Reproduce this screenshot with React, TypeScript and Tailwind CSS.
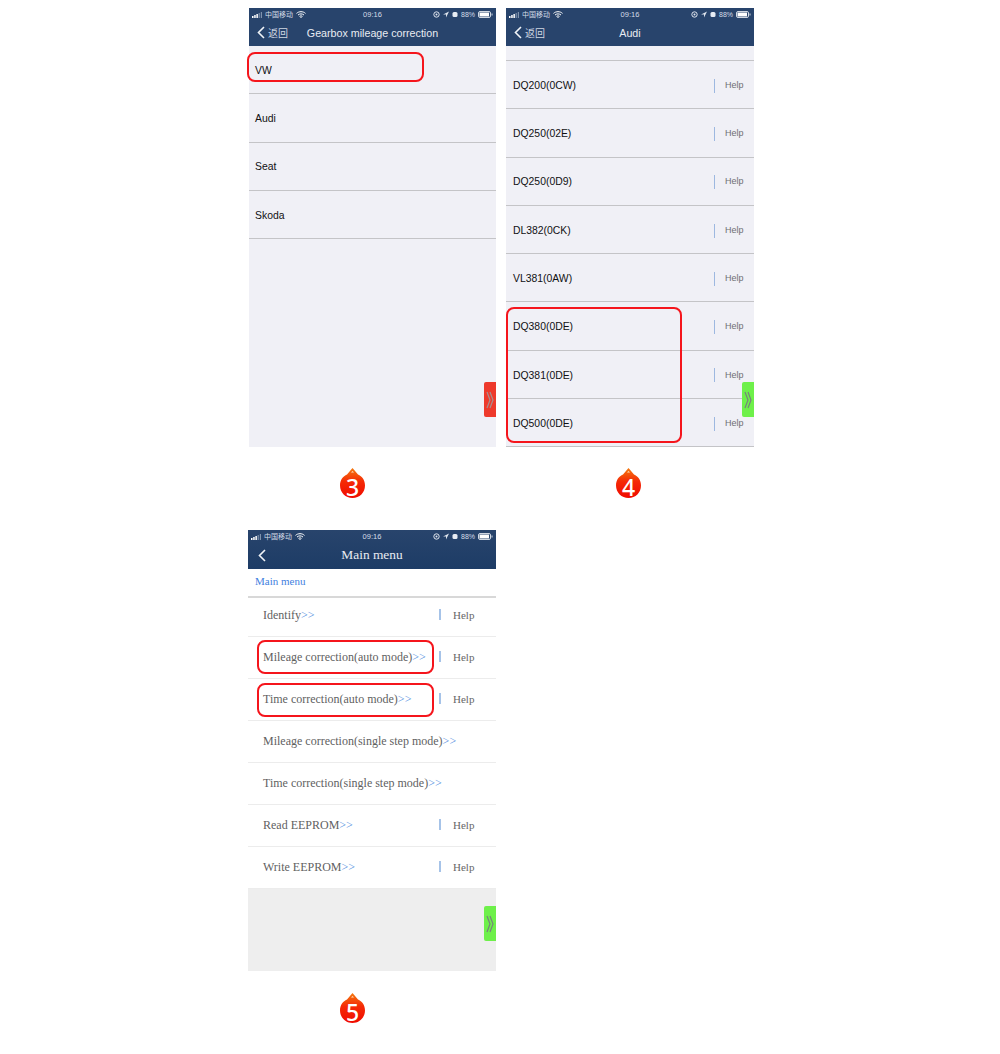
import React from "react";

const sans = "font-['Liberation_Sans','Noto_Sans_CJK_SC',sans-serif]";
const serif = "font-['Liberation_Serif','Noto_Sans_CJK_SC',serif]";

function StatusBar() {
  return (
    <div className={`h-[13px] flex items-center justify-between pl-[3px] pr-[3px] text-[7px] leading-none text-[#d5dde8] ${sans}`}>
      <div className="flex items-center gap-[2px] w-[90px]">
        <svg width="11" height="6" viewBox="0 0 11 6">
          <rect x="0" y="4" width="1.5" height="2" fill="#fff" />
          <rect x="2.2" y="3" width="1.5" height="3" fill="#fff" />
          <rect x="4.4" y="2" width="1.5" height="4" fill="#fff" />
          <rect x="6.6" y="1" width="1.2" height="5" fill="#7f93ad" />
          <rect x="8.8" y="0" width="1.2" height="6" fill="#7f93ad" />
        </svg>
        <span>中国移动</span>
        <svg width="10" height="7" viewBox="0 0 10 7" className="ml-[1px]">
          <path d="M0.5 2.4C3 .1 7 .1 9.5 2.4M2 4C3.8 2.5 6.2 2.5 8 4M3.5 5.4C4.4 4.7 5.6 4.7 6.5 5.4" stroke="#fff" strokeWidth="1" fill="none" />
          <circle cx="5" cy="6.2" r=".7" fill="#fff" />
        </svg>
      </div>
      <span className="text-[7.5px]">09:16</span>
      <div className="flex items-center justify-end gap-[3px] w-[90px]">
        <svg width="7" height="7" viewBox="0 0 7 7"><circle cx="3.5" cy="3.5" r="2.7" stroke="#dfe5ee" strokeWidth="1" fill="none" /><circle cx="3.5" cy="3.5" r="1" fill="#dfe5ee" /></svg>
        <svg width="6" height="7" viewBox="0 0 6 7"><path d="M6 .5L0 3.5h3v3z" fill="#dfe5ee" /></svg>
        <svg width="6" height="7" viewBox="0 0 6 7"><rect x=".5" y="1" width="5" height="5" rx="1.5" fill="#e7ecf3" /></svg>
        <span>88%</span>
        <svg width="15" height="7" viewBox="0 0 15 7">
          <rect x=".5" y=".5" width="12" height="6" rx="1.5" stroke="#cfd7e2" fill="none" />
          <rect x="1.5" y="1.5" width="9.5" height="4" fill="#fff" />
          <rect x="13.5" y="2.5" width="1" height="2" fill="#cfd7e2" />
        </svg>
      </div>
    </div>
  );
}

function Chevron() {
  return (
    <svg width="8" height="13" viewBox="0 0 8 13" className="shrink-0">
      <path d="M7 1L1.5 6.5L7 12" stroke="#f1f4f8" strokeWidth="1.6" fill="none" />
    </svg>
  );
}

function Header({ title }: { title: string }) {
  return (
    <div className="h-[38px] bg-[#28446c] text-white">
      <StatusBar />
      <div className={`relative h-[24px] flex items-center justify-center text-[10.7px] text-[#e8ecf2] ${sans}`}>
        <div className="absolute left-[8px] top-[4px] flex items-center gap-[3px]">
          <Chevron />
          <span className="text-[10px] font-['Noto_Sans_CJK_SC',sans-serif] text-[#cfd7e2]">返回</span>
        </div>
        <span className="font-medium">{title}</span>
      </div>
    </div>
  );
}

function Tab({ green, className }: { green?: boolean; className: string }) {
  return (
    <div className={`absolute right-0 w-[12px] h-[35px] rounded-l-[2px] flex items-center justify-center ${green ? "bg-[#6ef04a]" : "bg-[#ee3a2c]"} ${className}`}>
      <svg width="8" height="20" viewBox="0 0 8 20">
        <path d="M1 2L4 10L1 18M4 2L7 10L4 18" stroke={green ? "#76847c" : "#a89090"} strokeWidth="1.2" fill="none" />
      </svg>
    </div>
  );
}

function Row1({ label, help, inset }: { label: string; help?: boolean; inset?: boolean }) {
  return (
    <div className={`h-[48.3px] border-b border-[#c4c4c7] flex items-center pt-[2px] ${inset ? "pl-[7px]" : "pl-[6px]"} text-[10.4px] text-[#111113] ${sans}`}>
      <span className="grow">{label}</span>
      {help && (
        <div className="flex items-center w-[40px] shrink-0">
          <span className="w-[1px] h-[14px] bg-[#9db8e0]" />
          <span className="ml-[10px] text-[9px] text-[#6f6f73]">Help</span>
        </div>
      )}
    </div>
  );
}

function Row3({ label, help = true, first }: { label: string; help?: boolean; first?: boolean }) {
  return (
    <div className={`${first ? "h-[39px] pb-[5px]" : "h-[42px] pb-[2px]"} border-b border-[#ececec] flex items-center pl-[15px] text-[12px] text-[#5f5f5f] ${serif}`}>
      <span className="grow">
        {label}
        <span className="text-[#4f8ce0]">&gt;&gt;</span>
      </span>
      {help && (
        <div className="flex items-center w-[57px] shrink-0">
          <span className="w-[2px] h-[11px] bg-[#a6c3e8]" />
          <span className="ml-[12px] pt-[1px] text-[11px] text-[#666]">Help</span>
        </div>
      )}
    </div>
  );
}

function Badge({ n }: { n: number }) {
  return (
    <div className="relative w-[25px] h-[30px]">
      <svg width="25" height="30" viewBox="0 0 25 30" className="absolute inset-0">
        <defs>
          <linearGradient id={`b${n}`} x1="0" y1="0" x2="0" y2="1">
            <stop offset="0" stopColor="#f47a10" />
            <stop offset="0.45" stopColor="#f52a06" />
            <stop offset="1" stopColor="#f00a00" />
          </linearGradient>
        </defs>
        <path d="M12.5 0L18 6.5C22 8.2 25 12 25 17.5C25 24.5 19.5 30 12.5 30C5.5 30 0 24.5 0 17.5C0 12 3 8.2 7 6.5Z" fill={`url(#b${n})`} />
        <path d="M11 4.5L12.5 3L14 4.5Z" fill="#ffe2c0" />
      </svg>
      <span className="absolute inset-x-0 top-[7px] text-center text-[23px] leading-[24px] font-medium text-white font-['Noto_Sans',sans-serif]">{n}</span>
    </div>
  );
}

function RedBox({ className }: { className: string }) {
  return <div className={`absolute border-2 border-[#f5151c] rounded-[8px] ${className}`} />;
}

export default function App() {
  return (
    <div className="w-[1000px] h-[1054px] bg-white pt-[8px] overflow-hidden">
      <div className="flex items-start">
        <div className="ml-[249px] w-[247px]">
          <div className="relative h-[439px] bg-[#f0f0f6]">
            <Header title="Gearbox mileage correction" />
            <Row1 label="VW" />
            <Row1 label="Audi" />
            <Row1 label="Seat" />
            <Row1 label="Skoda" />
            <Tab className="top-[374px]" />
            <RedBox className="left-[-2px] top-[44px] w-[177px] h-[30px]" />
          </div>
          <div className="pt-[21px] pl-[91px]">
            <Badge n={3} />
          </div>
        </div>
        <div className="ml-[10px] w-[248px]">
          <div className="relative h-[439px] bg-[#f0f0f6]">
            <Header title="Audi" />
            <div className="h-[15px] border-b border-[#c4c4c7]" />
            {["DQ200(0CW)", "DQ250(02E)", "DQ250(0D9)", "DL382(0CK)", "VL381(0AW)", "DQ380(0DE)", "DQ381(0DE)", "DQ500(0DE)"].map((l) => (
              <Row1 key={l} label={l} help inset />
            ))}
            <Tab green className="top-[374px]" />
            <RedBox className="left-0 top-[299px] w-[176px] h-[136px]" />
          </div>
          <div className="pt-[21px] pl-[110px]">
            <Badge n={4} />
          </div>
        </div>
      </div>

      <div className="ml-[248px] w-[248px] mt-[32px]">
        <div className="relative h-[441px] bg-white">
          <div className="h-[39px] bg-gradient-to-b from-[#28446c] to-[#1d3c66] text-white">
            <StatusBar />
            <div className={`relative h-[24px] flex items-center justify-center text-[13.4px] text-[#e8ecf2] ${serif}`}>
              <div className="absolute left-[10px] top-[6px]"><Chevron /></div>
              <span>Main menu</span>
            </div>
          </div>
          <div className={`h-[29px] border-b-2 border-[#d8d8d8] pl-[7px] pt-[4px] text-[11px] text-[#3f7fe0] ${serif}`}>Main menu</div>
          <Row3 first label="Identify" />
          <Row3 label="Mileage correction(auto mode)" />
          <Row3 label="Time correction(auto mode)" />
          <Row3 label="Mileage correction(single step mode)" help={false} />
          <Row3 label="Time correction(single step mode)" help={false} />
          <Row3 label="Read EEPROM" />
          <Row3 label="Write EEPROM" />
          <div className="h-[82px] bg-[#eeeeee]" />
          <Tab green className="top-[376px]" />
          <RedBox className="left-[9px] top-[110px] w-[177px] h-[34px]" />
          <RedBox className="left-[9px] top-[153px] w-[177px] h-[34px]" />
        </div>
        <div className="pt-[22px] pl-[92px]">
          <Badge n={5} />
        </div>
      </div>
    </div>
  );
}
